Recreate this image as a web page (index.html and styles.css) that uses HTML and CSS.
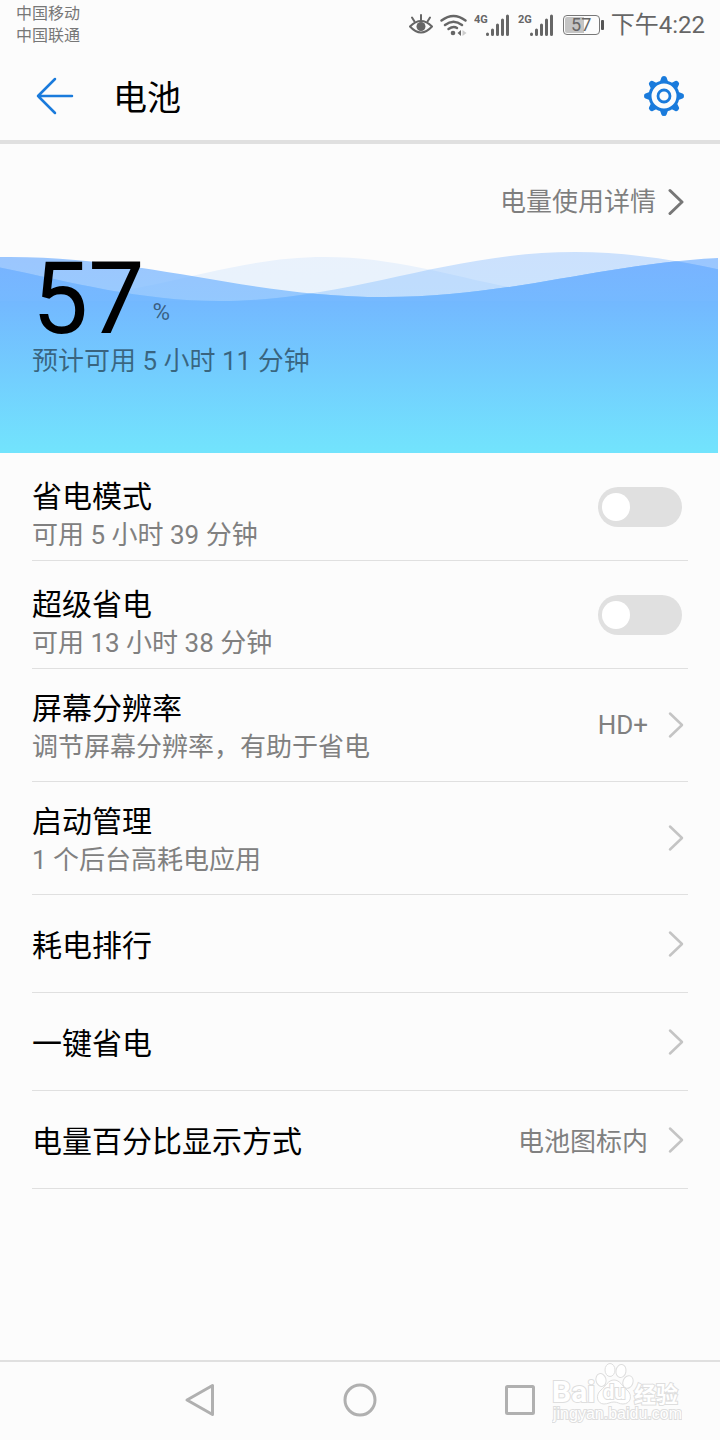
FILE: index.html
```html
<!DOCTYPE html>
<html lang="zh-CN">
<head>
    <meta charset="UTF-8">
    <meta name="viewport" content="width=device-width, initial-scale=1.0">
    <title>电池</title>
    <link rel="stylesheet" href="styles.css">
</head>
<body>
    <div class="status-bar">
        <div class="carriers">
            <div>中国移动</div>
            <div>中国联通</div>
        </div>
        <div class="status-icons">
            <svg width="24" height="22" viewBox="0 0 24 22" fill="none" stroke="#666" stroke-width="2" stroke-linecap="round">
                <path d="M1 12.500Q12 1.500 23 12.500Q12 24.500 1 12.500Z" stroke-linejoin="round"/>
                <circle cx="12" cy="12.500" r="4.500" fill="#666" stroke="none"/>
                <path d="M12 1V6M3 3.500L5.500 7.500M21 3.500L18.500 7.500"/>
            </svg>
            <svg width="27" height="22" viewBox="0 0 27 22" fill="none" stroke="#666" stroke-width="2.400" stroke-linecap="round">
                <path d="M1.500 6.500Q13.500 -2.500 25.500 6.500M5 11Q13.500 4.500 22 11M8.500 15Q13.500 11.500 17 14"/>
                <circle cx="13" cy="19" r="2.300" fill="#666" stroke="none"/>
                <path d="M21 16V22L17.500 19Z" fill="#666" stroke="none"/>
                <path d="M22.500 16V22L26.500 19Z" fill="#ccc" stroke="none"/>
            </svg>
            <svg class="signal" width="37" height="24" viewBox="0 0 37 24">
                <text x="0" y="10">4G</text>
                <path d="M13.500 21V21.500M18.500 17V21.500M23.500 12V21.500M28.500 7V21.500M33.500 3V21.500"/>
            </svg>
            <svg class="signal" width="37" height="24" viewBox="0 0 37 24">
                <text x="0" y="10">2G</text>
                <path d="M13.500 21V21.500M18.500 17V21.500M23.500 12V21.500M28.500 7V21.500M33.500 3V21.500"/>
            </svg>
            <div class="battery"><span>57</span></div>
            <div class="clock">下午4:22</div>
        </div>
    </div>

    <header class="header">
        <button class="icon-button" aria-label="返回">
            <svg width="40" height="40" viewBox="0 0 40 40" fill="none" stroke="#1a7bdc" stroke-width="2.500" stroke-linecap="round" stroke-linejoin="round">
                <path d="M37 20H3M20 3L3 20L20 37"/>
            </svg>
        </button>
        <h1>电池</h1>
        <button class="icon-button" aria-label="设置">
            <svg width="40" height="40" viewBox="-20 -20 40 40" fill="none" stroke="#1a7bdc">
                <circle r="14" stroke-width="3"/>
                <circle r="6" stroke-width="2.800"/>
                <g fill="#1a7bdc" stroke="none">
                    <path id="tooth" d="M-4 -14.500L-2.600 -18.500Q-2.300 -20 0 -20Q2.300 -20 2.600 -18.500L4 -14.500Z"/>
                    <use href="#tooth" transform="rotate(45)"/>
                    <use href="#tooth" transform="rotate(90)"/>
                    <use href="#tooth" transform="rotate(135)"/>
                    <use href="#tooth" transform="rotate(180)"/>
                    <use href="#tooth" transform="rotate(225)"/>
                    <use href="#tooth" transform="rotate(270)"/>
                    <use href="#tooth" transform="rotate(315)"/>
                </g>
            </svg>
        </button>
    </header>

    <main>
        <section class="level">
            <svg class="waves" viewBox="0 0 718 203" preserveAspectRatio="none">
                <defs>
                    <linearGradient id="water" gradientUnits="userSpaceOnUse" x1="0" y1="0" x2="0" y2="203">
                        <stop offset="0" stop-color="#76b0ff"/>
                        <stop offset="0.250" stop-color="#73b8ff"/>
                        <stop offset="1" stop-color="#72e4fd"/>
                    </linearGradient>
                    <path id="wave-front" d="M10 7C147 7 248 47 385 47S618 7 755 7V203H-5V7Z"/>
                    <path id="wave-middle" d="M-135 2C-6 2 91 51 220 51S446 2 575 2S801 51 930 51V203H-135Z"/>
                    <path id="wave-back" d="M-60 47H50C150 47 225 7 325 7S500 47 600 47S775 7 875 7V203H-60Z"/>
                    <clipPath id="front-clip"><use href="#wave-front"/></clipPath>
                </defs>
                <g fill="url(#water)">
                    <use href="#wave-back" opacity="0.140"/>
                    <use href="#wave-middle" opacity="0.360"/>
                    <use href="#wave-front" opacity="0.720"/>
                    <g clip-path="url(#front-clip)"><use href="#wave-middle" opacity="0.900"/></g>
                    <rect y="51" width="718" height="152"/>
                </g>
            </svg>
            <a href="#" class="detail-link">
                电量使用详情
                <svg class="chevron" viewBox="0 0 16 28"><path d="M2 2.500L14 14L2 25.500"/></svg>
            </a>
            <div class="percent">
                <span class="percent-number">57</span>
                <span class="percent-sign">%</span>
            </div>
            <div class="remaining">预计可用 5 小时 11 分钟</div>
        </section>

        <div class="list">
            <label class="row">
                <span class="row-text switch-text">
                    <span class="row-title">省电模式</span>
                    <span class="row-desc">可用 5 小时 39 分钟</span>
                </span>
                <input type="checkbox" class="switch">
            </label>
            <label class="row">
                <span class="row-text switch-text">
                    <span class="row-title">超级省电</span>
                    <span class="row-desc">可用 13 小时 38 分钟</span>
                </span>
                <input type="checkbox" class="switch">
            </label>
            <a href="#" class="row">
                <span class="row-text">
                    <span class="row-title">屏幕分辨率</span>
                    <span class="row-desc">调节屏幕分辨率，有助于省电</span>
                </span>
                <span class="row-value">HD+</span>
                <svg class="chevron" viewBox="0 0 16 28"><path d="M2 2.500L14 14L2 25.500"/></svg>
            </a>
            <a href="#" class="row">
                <span class="row-text">
                    <span class="row-title">启动管理</span>
                    <span class="row-desc">1 个后台高耗电应用</span>
                </span>
                <svg class="chevron" viewBox="0 0 16 28"><path d="M2 2.500L14 14L2 25.500"/></svg>
            </a>
            <a href="#" class="row single">
                <span class="row-title">耗电排行</span>
                <svg class="chevron" viewBox="0 0 16 28"><path d="M2 2.500L14 14L2 25.500"/></svg>
            </a>
            <a href="#" class="row single">
                <span class="row-title">一键省电</span>
                <svg class="chevron" viewBox="0 0 16 28"><path d="M2 2.500L14 14L2 25.500"/></svg>
            </a>
            <a href="#" class="row single">
                <span class="row-title">电量百分比显示方式</span>
                <span class="row-value">电池图标内</span>
                <svg class="chevron" viewBox="0 0 16 28"><path d="M2 2.500L14 14L2 25.500"/></svg>
            </a>
        </div>
    </main>

    <nav class="nav-bar">
        <button aria-label="返回">
            <svg width="36" height="36" viewBox="0 0 36 36"><path d="M30.500 3.500V32.500L5 18Z"/></svg>
        </button>
        <button aria-label="主页">
            <svg width="36" height="36" viewBox="0 0 36 36"><circle cx="18" cy="18" r="15"/></svg>
        </button>
        <button aria-label="最近任务">
            <svg width="36" height="36" viewBox="0 0 36 36"><rect x="4.500" y="4.500" width="27" height="27" rx="1"/></svg>
        </button>
        <svg class="watermark" width="130" height="62" viewBox="0 0 130 62">
            <ellipse cx="49" cy="18" rx="5" ry="6.500" transform="rotate(-15 49 18)"/>
            <ellipse cx="58" cy="8" rx="5" ry="6.500"/>
            <ellipse cx="69" cy="9" rx="5" ry="6.500" transform="rotate(10 69 9)"/>
            <ellipse cx="76" cy="20" rx="5" ry="6.500" transform="rotate(20 76 20)"/>
            <path d="M62 18C68 18 70 24 75 28C81 33 79 42 71 42C67 42 66 40 62 40C58 40 56 42 52 42C45 42 43 33 49 28C54 24 56 18 62 18Z"/>
            <text class="mark-big" x="0" y="40">Bai</text>
            <text class="mark-du" x="51" y="37">du</text>
            <text class="mark-cjk" x="82" y="40">经验</text>
            <text class="mark-url" x="1" y="57">jingyan.baidu.com</text>
        </svg>
    </nav>
</body>
</html>
```
FILE: styles.css
```css
* {
    box-sizing: border-box;
}
body {
    margin: 0;
    min-height: 100vh;
    display: flex;
    flex-direction: column;
    background-color: #fcfcfc;
    color: #000;
    font-family: Roboto, "Noto Sans CJK SC", sans-serif;
}
a {
    color: inherit;
    text-decoration: none;
}
button {
    border: 0;
    padding: 0;
    background: none;
    display: flex;
    align-items: center;
    justify-content: center;
}

/* status bar */
.status-bar {
    display: flex;
    justify-content: space-between;
    padding: 3px 15px 3px 16px;
    color: #666;
}
.carriers {
    font-size: 16px;
    line-height: 22px;
    color: #777;
}
.status-icons {
    display: flex;
    align-items: center;
    gap: 7px;
}
.signal text {
    font-size: 11px;
    font-weight: bold;
    fill: #666;
}
.signal path {
    stroke: #666;
    stroke-width: 3;
    stroke-linecap: round;
}
.battery {
    position: relative;
    width: 37px;
    height: 20px;
    margin: 0 4px 0 1px;
    border: 1px solid #777;
    border-radius: 4px;
    padding: 1px;
    background: linear-gradient(90deg, #c4c4c4 57%, transparent 57%) content-box;
    font-size: 18px;
    line-height: 16px;
    text-align: center;
}
.battery::after {
    content: "";
    position: absolute;
    right: -5px;
    top: 4px;
    width: 3px;
    height: 10px;
    border-radius: 1px;
    background-color: #555;
}
.clock {
    font-size: 24px;
    line-height: 32px;
}

/* title bar */
.header {
    display: flex;
    align-items: center;
    height: 94px;
    padding: 2px 36px 0 35px;
    border-bottom: 4px solid #e0e0e0;
}
.header h1 {
    flex: 1;
    margin: 0 0 0 38px;
    padding-top: 4px;
    font-size: 34px;
    font-weight: normal;
    line-height: 48px;
}
.icon-button {
    width: 40px;
    height: 40px;
}

/* battery level */
.level {
    position: relative;
    padding: 39px 32px 73px;
    color: rgba(0, 0, 0, 0.5);
    font-size: 26px;
    line-height: 38px;
}
.waves {
    position: absolute;
    left: 0;
    bottom: 0;
    z-index: -1;
    width: calc(100% - 2px);
    height: 203px;
}
.detail-link {
    display: flex;
    align-items: center;
    justify-content: flex-end;
    gap: 12px;
    padding-right: 4px;
}
.percent {
    display: flex;
    align-items: flex-end;
    gap: 8px;
    margin-top: 35px;
}
.percent-number {
    font-size: 100px;
    line-height: 86px;
    color: #000;
}
.percent-sign {
    font-size: 24px;
    line-height: 24px;
    padding-bottom: 18px;
}
.chevron {
    flex: none;
    width: 16px;
    height: 28px;
    fill: none;
    stroke: #c4c4c4;
    stroke-width: 2.5;
    stroke-linecap: round;
    stroke-linejoin: round;
}
.detail-link .chevron {
    stroke: #777;
    stroke-width: 3;
}

/* settings list */
.list {
    padding: 0 32px;
}
.row {
    display: flex;
    align-items: center;
    gap: 20px;
    padding-right: 4px;
    border-bottom: 1px solid #e0e0e0;
    line-height: 38px;
}
.row-text {
    flex: 1;
    display: flex;
    flex-direction: column;
    padding: 21px 0 15px;
}
.switch-text {
    padding: 25px 0 6px;
}
.row-title {
    font-size: 30px;
}
.row-desc,
.row-value {
    font-size: 26px;
    color: #808080;
}
.single {
    min-height: 98px;
}
.single .row-title {
    flex: 1;
}
.single .row-title,
.single .row-value {
    padding-top: 4px;
}
.switch {
    appearance: none;
    display: flex;
    align-items: center;
    width: 84px;
    height: 40px;
    margin: 0 2px 0 0;
    padding: 0 4px;
    border-radius: 20px;
    background-color: #e0e0e0;
}
.switch::before {
    content: "";
    width: 28px;
    height: 28px;
    border-radius: 50%;
    background-color: #fff;
}
.switch:checked {
    justify-content: flex-end;
    background-color: #1a7bdc;
}

/* system navigation */
.nav-bar {
    position: relative;
    display: flex;
    justify-content: center;
    height: 80px;
    margin-top: auto;
    padding-bottom: 2px;
    border-top: 2px solid #e0e0e0;
}
.nav-bar button {
    width: 160px;
}
.nav-bar button svg {
    fill: none;
    stroke: #b0b0b0;
    stroke-width: 3;
    stroke-linejoin: round;
}
.watermark {
    position: absolute;
    right: 38px;
    top: 0;
    fill: #fff;
    stroke: #dedede;
    stroke-width: 1;
}
.watermark text {
    stroke-width: 2;
    paint-order: stroke;
}
.mark-big {
    font-size: 30px;
    font-weight: bold;
}
.mark-du {
    font-size: 20px;
    font-weight: bold;
}
.mark-cjk {
    font-size: 22px;
    font-weight: bold;
}
.mark-url {
    font-family: "Liberation Sans", sans-serif;
    font-size: 16px;
}
```
